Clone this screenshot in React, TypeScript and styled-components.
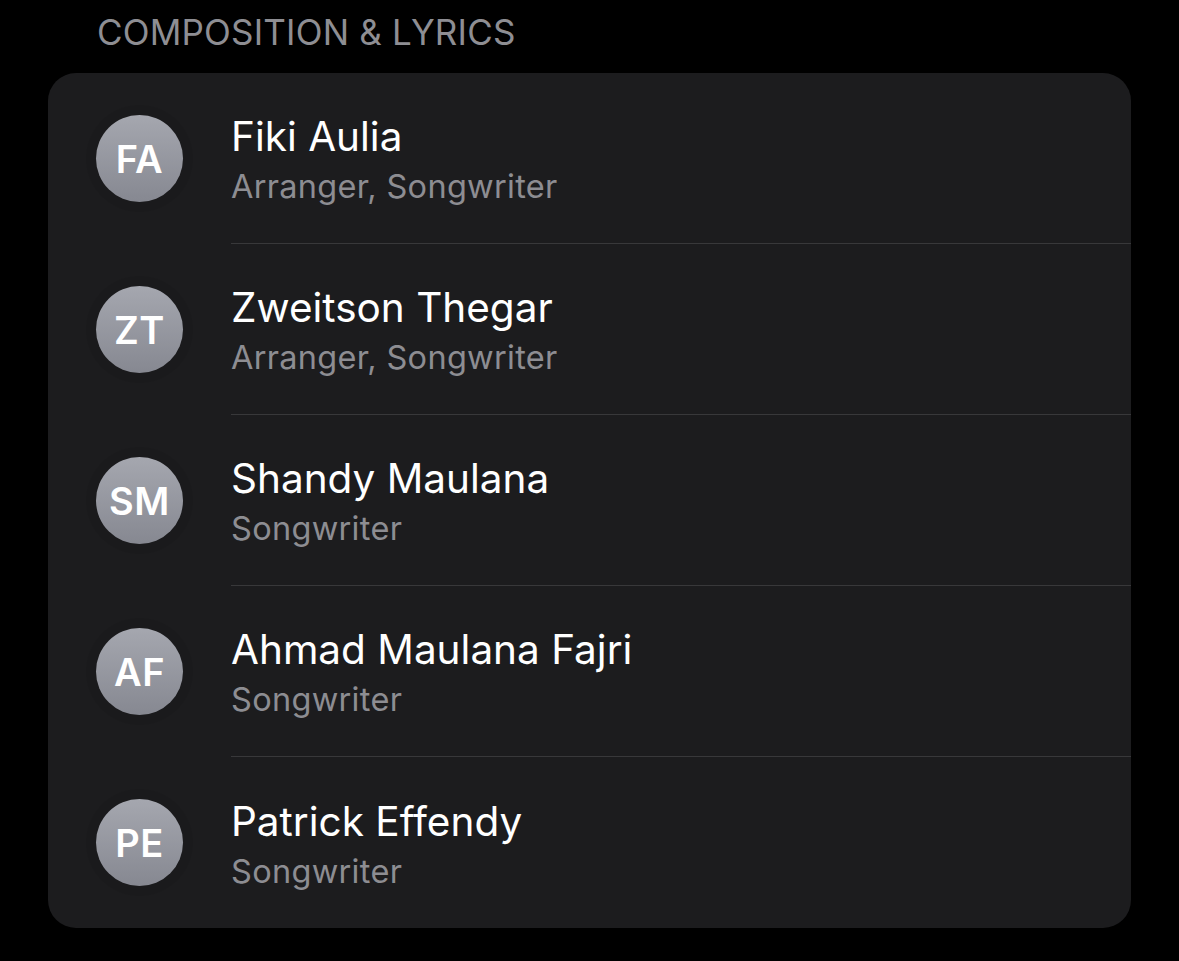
import styled, { createGlobalStyle } from 'styled-components';

const GlobalStyle = createGlobalStyle`
  html, body {
    margin: 0;
    padding: 0;
    background: #000;
  }
  body {
    font-family: Inter, "Noto Sans", "Liberation Sans", sans-serif;
    -webkit-font-smoothing: antialiased;
  }
`;

const Page = styled.div`
  width: 1179px;
  height: 961px;
  background: #000;
  overflow: hidden;
`;

const SectionHeader = styled.h2`
  margin: 0;
  padding: 10px 0 0 97px;
  height: 73px;
  box-sizing: border-box;
  color: #8e8e93;
  font-size: 35px;
  font-weight: 400;
  line-height: 44px;
  letter-spacing: 0.2px;
`;

const Card = styled.div`
  margin: 0 48px;
  background: #1c1c1e;
  border-radius: 28px;
  overflow: hidden;
`;

const Row = styled.div`
  display: flex;
  align-items: stretch;
  height: 171px;
  padding-left: 48px;
`;

const AvatarCell = styled.div`
  display: flex;
  align-items: center;
  width: 135px;
  flex-shrink: 0;
`;

const Avatar = styled.div`
  width: 87px;
  height: 87px;
  border-radius: 50%;
  background: linear-gradient(180deg, #a5a7af 0%, #868891 100%);
  box-shadow: 0 0 0 10px rgba(0, 0, 0, 0.05);
  display: flex;
  align-items: center;
  justify-content: center;
  color: #fff;
  font-size: 38px;
  font-weight: 600;
  letter-spacing: 0.5px;
`;

const Info = styled.div<{ $last?: boolean }>`
  flex: 1;
  display: flex;
  flex-direction: column;
  justify-content: center;
  border-bottom: ${(p) => (p.$last ? 'none' : '1.5px solid #38383a')};
  padding-top: 10px;
`;

const Name = styled.div`
  color: #fff;
  font-size: 40.5px;
  font-weight: 400;
  line-height: 48px;
`;

const Role = styled.div`
  color: #8d8d92;
  font-size: 32.5px;
  font-weight: 400;
  line-height: 52px;
  letter-spacing: 0.3px;
`;

const people = [
  { initials: 'FA', name: 'Fiki Aulia', role: 'Arranger, Songwriter' },
  { initials: 'ZT', name: 'Zweitson Thegar', role: 'Arranger, Songwriter' },
  { initials: 'SM', name: 'Shandy Maulana', role: 'Songwriter' },
  { initials: 'AF', name: 'Ahmad Maulana Fajri', role: 'Songwriter' },
  { initials: 'PE', name: 'Patrick Effendy', role: 'Songwriter' },
];

export default function App() {
  return (
    <Page>
      <GlobalStyle />
      <SectionHeader>COMPOSITION &amp; LYRICS</SectionHeader>
      <Card>
        {people.map((p, i) => (
          <Row key={p.initials}>
            <AvatarCell>
              <Avatar>{p.initials}</Avatar>
            </AvatarCell>
            <Info $last={i === people.length - 1}>
              <Name>{p.name}</Name>
              <Role>{p.role}</Role>
            </Info>
          </Row>
        ))}
      </Card>
    </Page>
  );
}
